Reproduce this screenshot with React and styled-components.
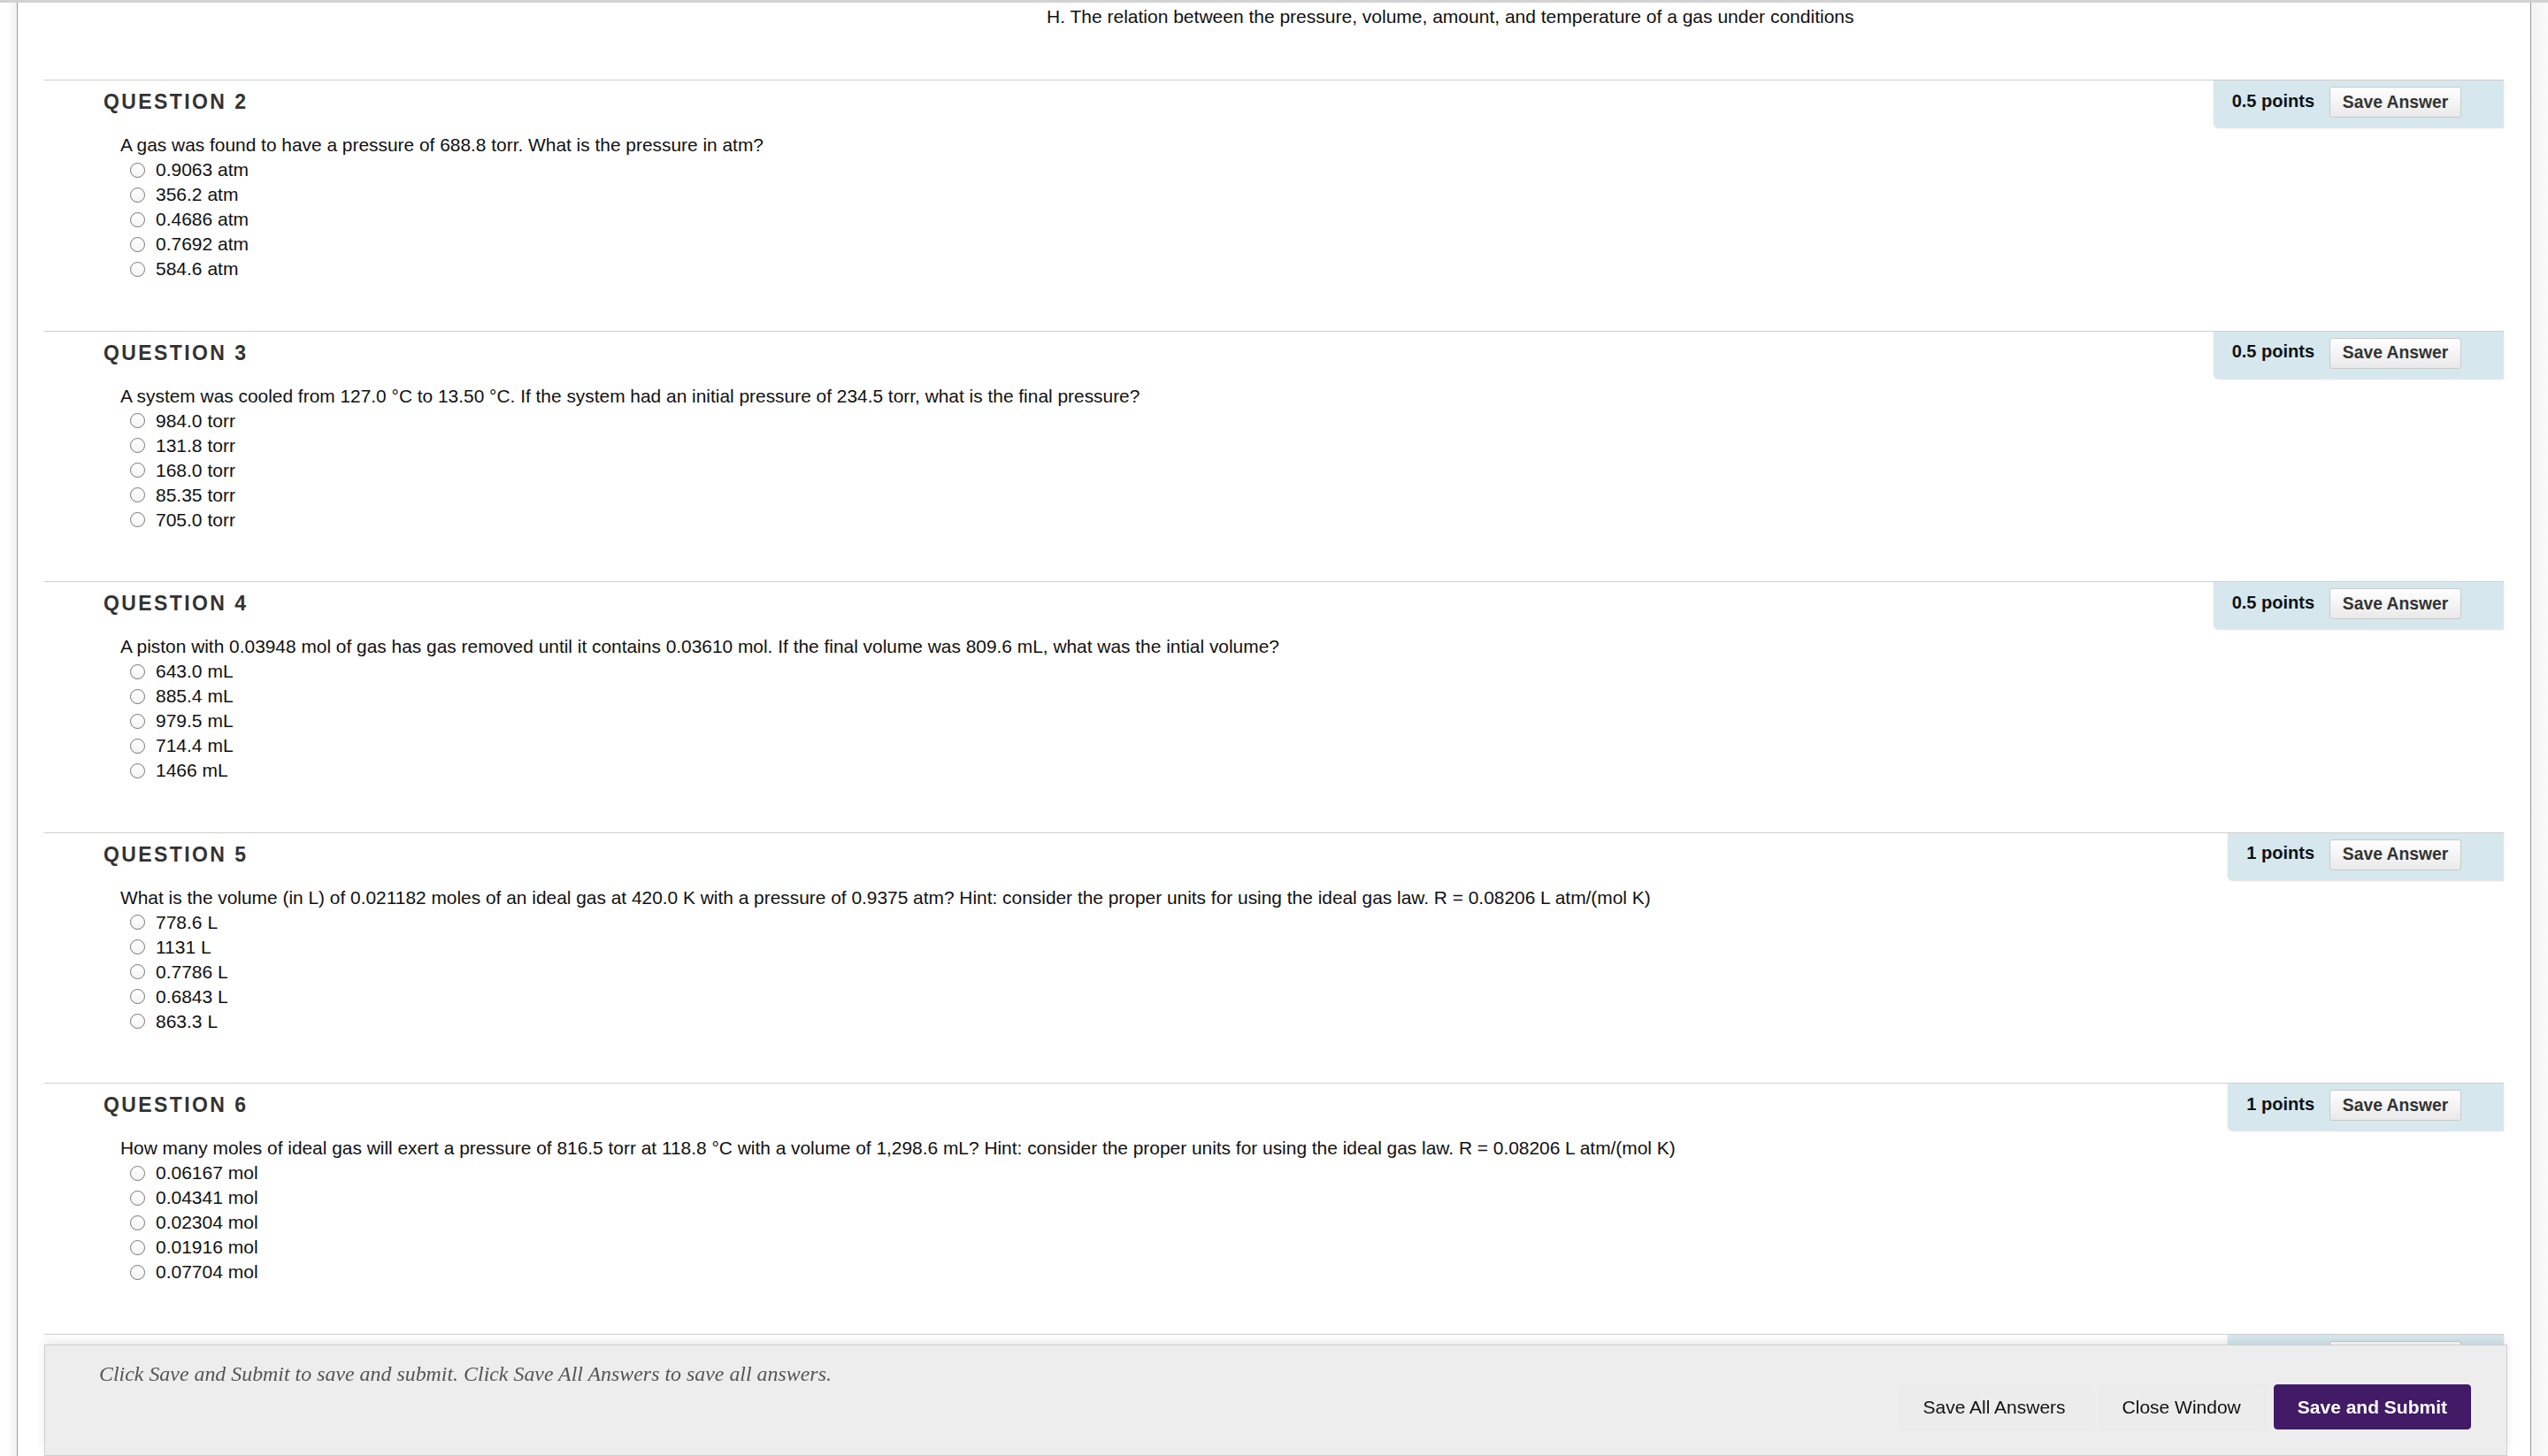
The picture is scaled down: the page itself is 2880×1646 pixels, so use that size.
import React from "react";
import styled, { createGlobalStyle } from "styled-components";

const GlobalStyle = createGlobalStyle`
  html, body {
    margin: 0;
    padding: 0;
    background: #ffffff;
    overflow: hidden;
  }
  body {
    font-family: "Liberation Sans", Arial, Helvetica, sans-serif;
    color: #111111;
  }
  * { box-sizing: border-box; }
`;

const Page = styled.div`
  display: flex;
  height: 100vh;
  border-top: 3px solid #d2d2d2;
  overflow: hidden;
`;

const LeftGutter = styled.div`
  width: 19px;
  flex: none;
  background: linear-gradient(to right, #ffffff 40%, #f1f1f1 100%);
`;

const RightGutter = styled.div`
  flex: 1;
  background: linear-gradient(to right, #f3f3f3, #fafafa);
`;

const Frame = styled.main`
  width: 2842px;
  flex: none;
  border-left: 1px solid #9a9a9a;
  border-right: 1px solid #9a9a9a;
  padding: 0 30px 0 30px;
  background: #ffffff;
  overflow: hidden;
`;

const PrevAnswer = styled.div`
  height: 87px;
  padding: 3px 0 0 1133px;
  font-size: 21px;
  line-height: 25px;
  color: #111111;
  white-space: nowrap;
`;

const Section = styled.section`
  height: 283.6px;
  border-top: 1px solid #cfcfcf;
`;

const SectionHead = styled.div`
  height: 60px;
  display: flex;
  justify-content: space-between;
  align-items: flex-start;
`;

const QuestionLabel = styled.h2`
  margin: 10px 0 0 67px;
  font-size: 23px;
  line-height: 28px;
  font-weight: 700;
  letter-spacing: 2.4px;
  color: #333333;
`;

const Spacer = styled.div`
  flex: 1;
`;

const PointsBox = styled.div`
  display: flex;
  align-items: center;
  gap: 17px;
  padding: 7px 48px 11px 21px;
  background: #d6e8ee;
  border-bottom-left-radius: 6px;
  box-shadow: 0 1px 2px rgba(0, 0, 0, 0.14);
`;

const Points = styled.span`
  font-size: 20px;
  font-weight: 700;
  color: #111111;
  margin-top: -3px;
`;

const SaveAnswerButton = styled.button`
  height: 35px;
  width: 149px;
  padding: 0;
  font-family: inherit;
  font-size: 19.3px;
  font-weight: 700;
  color: #333333;
  background: linear-gradient(#ffffff, #e9e9e9);
  border: 1px solid #c9c9c9;
  border-radius: 3px;
`;

const Prompt = styled.p`
  margin: -1px 0 0 86px;
  font-size: 20.9px;
  line-height: 28px;
  color: #111111;
  white-space: nowrap;
`;

const OptionList = styled.ul`
  list-style: none;
  margin: 0 0 0 86px;
  padding: 0;
`;

const Option = styled.li`
  display: flex;
  align-items: center;
  height: 28px;
  font-size: 21px;
  color: #111111;
`;

const Radio = styled.input`
  appearance: none;
  -webkit-appearance: none;
  width: 17px;
  height: 17px;
  margin: 0 12px 0 11px;
  border: 1.6px solid #747474;
  border-radius: 50%;
  background: linear-gradient(#ffffff, #f4f4f4);
`;

const Footer = styled.footer`
  position: fixed;
  left: 50px;
  right: 46px;
  bottom: 0;
  height: 126px;
  display: flex;
  justify-content: space-between;
  padding: 0 40px 0 61px;
  background: #ededed;
  border: 1px solid #cfcfcf;
  box-shadow: 0 -5px 9px rgba(0, 0, 0, 0.08);
`;

const Instruction = styled.p`
  align-self: flex-start;
  margin: 18px 0 0;
  font-family: "Liberation Serif", "Times New Roman", serif;
  font-style: italic;
  font-size: 23.9px;
  line-height: 28px;
  color: #555555;
  white-space: nowrap;
`;

const ButtonRow = styled.div`
  align-self: flex-end;
  display: flex;
  gap: 10px;
  margin-bottom: 29px;
`;

const FooterButton = styled.button`
  height: 51px;
  padding: 0 26px;
  font-family: "Liberation Sans", Arial, sans-serif;
  font-size: 21px;
  font-weight: ${(p) => (p.$primary ? 700 : 400)};
  color: ${(p) => (p.$primary ? "#ffffff" : "#111111")};
  background: ${(p) => (p.$primary ? "#421b66" : "#ececec")};
  border: 1px solid ${(p) => (p.$primary ? "#421b66" : "#e9e9e9")};
  border-radius: 4px;
`;

const questions = [
  {
    n: 2,
    pts: "0.5",
    text: "A gas was found to have a pressure of 688.8 torr. What is the pressure in atm?",
    options: ["0.9063 atm", "356.2 atm", "0.4686 atm", "0.7692 atm", "584.6 atm"],
  },
  {
    n: 3,
    pts: "0.5",
    text: "A system was cooled from 127.0 °C to 13.50 °C. If the system had an initial pressure of 234.5 torr, what is the final pressure?",
    options: ["984.0 torr", "131.8 torr", "168.0 torr", "85.35 torr", "705.0 torr"],
  },
  {
    n: 4,
    pts: "0.5",
    text: "A piston with 0.03948 mol of gas has gas removed until it contains 0.03610 mol. If the final volume was 809.6 mL, what was the intial volume?",
    options: ["643.0 mL", "885.4 mL", "979.5 mL", "714.4 mL", "1466 mL"],
  },
  {
    n: 5,
    pts: "1",
    text: "What is the volume (in L) of 0.021182 moles of an ideal gas at 420.0 K with a pressure of 0.9375 atm? Hint: consider the proper units for using the ideal gas law. R = 0.08206 L atm/(mol K)",
    options: ["778.6 L", "1131 L", "0.7786 L", "0.6843 L", "863.3 L"],
  },
  {
    n: 6,
    pts: "1",
    text: "How many moles of ideal gas will exert a pressure of 816.5 torr at 118.8 °C with a volume of 1,298.6 mL? Hint: consider the proper units for using the ideal gas law. R = 0.08206 L atm/(mol K)",
    options: ["0.06167 mol", "0.04341 mol", "0.02304 mol", "0.01916 mol", "0.07704 mol"],
  },
  {
    n: 7,
    pts: "1",
    peek: true,
    text: "",
    options: [],
  },
];

function Question({ q }) {
  return (
    <Section>
      <SectionHead>
        {q.peek ? <Spacer /> : <QuestionLabel>QUESTION {q.n}</QuestionLabel>}
        <PointsBox>
          <Points>{q.pts} points</Points>
          <SaveAnswerButton type="button">Save Answer</SaveAnswerButton>
        </PointsBox>
      </SectionHead>
      {q.text && <Prompt>{q.text}</Prompt>}
      <OptionList>
        {q.options.map((o) => (
          <Option key={o}>
            <Radio type="radio" name={`q${q.n}`} readOnly />
            <span>{o}</span>
          </Option>
        ))}
      </OptionList>
    </Section>
  );
}

export default function App() {
  return (
    <>
      <GlobalStyle />
      <Page>
        <LeftGutter />
        <Frame>
          <PrevAnswer>
            H. The relation between the pressure, volume, amount, and temperature of a gas under conditions
          </PrevAnswer>
          {questions.map((q) => (
            <Question key={q.n} q={q} />
          ))}
        </Frame>
        <RightGutter />
      </Page>
      <Footer>
        <Instruction>
          Click Save and Submit to save and submit. Click Save All Answers to save all answers.
        </Instruction>
        <ButtonRow>
          <FooterButton type="button">Save All Answers</FooterButton>
          <FooterButton type="button">Close Window</FooterButton>
          <FooterButton type="button" $primary>
            Save and Submit
          </FooterButton>
        </ButtonRow>
      </Footer>
    </>
  );
}
